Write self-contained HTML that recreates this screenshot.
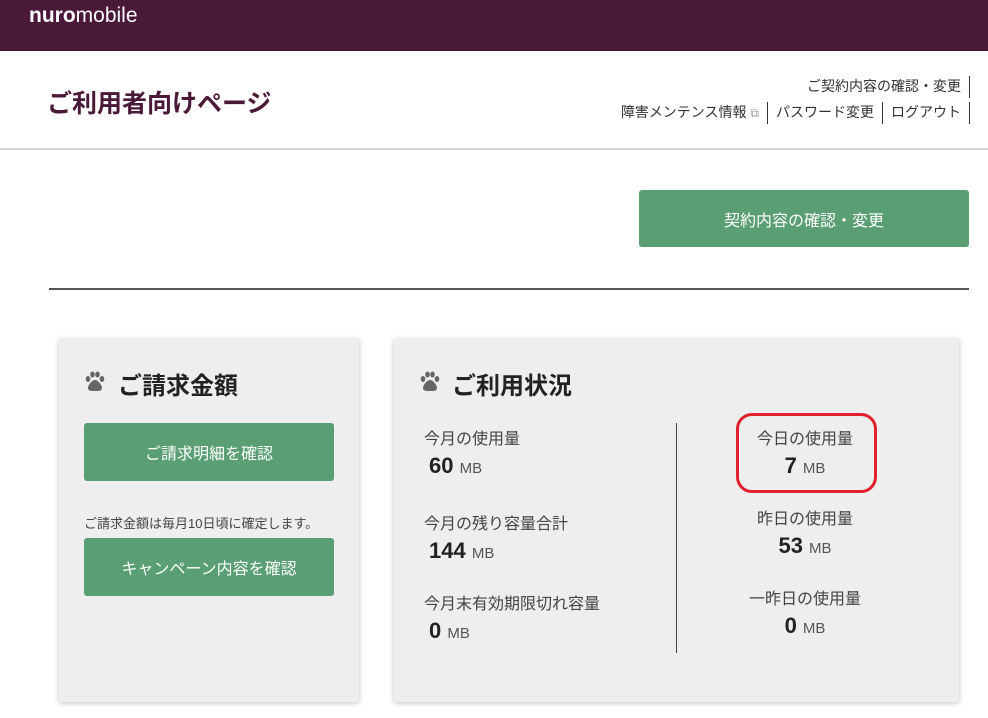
<!DOCTYPE html>
<html><head><meta charset="utf-8"><style>
*{margin:0;padding:0;box-sizing:border-box}
body{width:988px;height:718px;position:relative;overflow:hidden;background:#fff;font-family:"Liberation Sans","Noto Sans CJK JP",sans-serif;color:#333}
.a{position:absolute;white-space:nowrap}
.btn{position:absolute;background:#5a9e74;color:#fff;border-radius:3px;display:flex;align-items:center;justify-content:center;font-size:16px}
.card{position:absolute;background:#eeeeee;box-shadow:0 1px 5px rgba(0,0,0,.25)}
.lbl{font-size:16px;color:#444}
.num{font-size:22px;font-weight:bold;color:#222}
.num span{font-size:15px;font-weight:normal;color:#555}
.vb{display:inline-block;width:1px;height:22px;background:#333;vertical-align:middle;margin:0 8px}
.h{font-size:24px;font-weight:bold;color:#222}
.paw{position:absolute;width:22px;height:22px}
</style></head><body>
<div class="a" style="left:0;top:0;width:988px;height:51px;background:#4a1838"></div>
<div class="a" style="left:29px;top:4px;font-size:21px;color:#fff"><b>nuro</b>mobile</div>
<div class="a" style="left:47px;top:84px;font-size:25px;font-weight:bold;color:#4a1838">ご利用者向けページ</div>
<div class="a" style="right:18px;top:76px;font-size:14px;color:#333">ご契約内容の確認・変更<span class="vb" style="margin-right:0"></span></div>
<div class="a" style="right:18px;top:102px;font-size:14px;color:#333">障害メンテンス情報 <span style="color:#999;font-size:12px">⧉</span><span class="vb"></span>パスワード変更<span class="vb"></span>ログアウト<span class="vb" style="margin-right:0"></span></div>
<div class="a" style="left:0;top:148px;width:988px;height:2px;background:#d4d4d4"></div>
<div class="btn" style="left:639px;top:190px;width:330px;height:57px">契約内容の確認・変更</div>
<div class="a" style="left:49px;top:288px;width:920px;height:2px;background:#555"></div>

<svg width="0" height="0" style="position:absolute"><defs><g id="p" fill="#666"><ellipse cx="4" cy="9" rx="2.3" ry="3"/><ellipse cx="8.5" cy="4.5" rx="2.3" ry="3"/><ellipse cx="13.5" cy="4.5" rx="2.3" ry="3"/><ellipse cx="18" cy="9" rx="2.3" ry="3"/><path d="M11 10c3 0 7 5 7 8s-3 3-7 3-7 0-7-3 4-8 7-8z"/></g></defs></svg>

<div class="card" style="left:59px;top:339px;width:300px;height:363px"></div>
<svg class="paw" style="left:84px;top:370px" viewBox="0 0 22 22"><use href="#p"/></svg>
<div class="a h" style="left:118px;top:366px">ご請求金額</div>
<div class="btn" style="left:84px;top:423px;width:250px;height:58px">ご請求明細を確認</div>
<div class="a" style="left:84px;top:513px;font-size:13px;color:#444">ご請求金額は毎月10日頃に確定します。</div>
<div class="btn" style="left:84px;top:538px;width:250px;height:58px">キャンペーン内容を確認</div>

<div class="card" style="left:394px;top:339px;width:565px;height:363px"></div>
<svg class="paw" style="left:419px;top:370px" viewBox="0 0 22 22"><use href="#p"/></svg>
<div class="a h" style="left:452px;top:366px">ご利用状況</div>
<div class="a" style="left:676px;top:423px;width:1px;height:230px;background:#444"></div>
<div class="a lbl" style="left:424px;top:425px">今月の使用量</div>
<div class="a num" style="left:429px;top:453px">60 <span>MB</span></div>
<div class="a lbl" style="left:424px;top:510px">今月の残り容量合計</div>
<div class="a num" style="left:429px;top:538px">144 <span>MB</span></div>
<div class="a lbl" style="left:424px;top:590px">今月末有効期限切れ容量</div>
<div class="a num" style="left:429px;top:618px">0 <span>MB</span></div>

<div class="a lbl" style="left:735px;width:140px;text-align:center;top:425px">今日の使用量</div>
<div class="a num" style="left:735px;width:140px;text-align:center;top:453px">7 <span>MB</span></div>
<div class="a" style="left:736px;top:413px;width:141px;height:80px;border:3px solid #e0202a;border-radius:16px"></div>
<div class="a lbl" style="left:735px;width:140px;text-align:center;top:505px">昨日の使用量</div>
<div class="a num" style="left:735px;width:140px;text-align:center;top:533px">53 <span>MB</span></div>
<div class="a lbl" style="left:735px;width:140px;text-align:center;top:585px">一昨日の使用量</div>
<div class="a num" style="left:735px;width:140px;text-align:center;top:613px">0 <span>MB</span></div>
</body></html>
